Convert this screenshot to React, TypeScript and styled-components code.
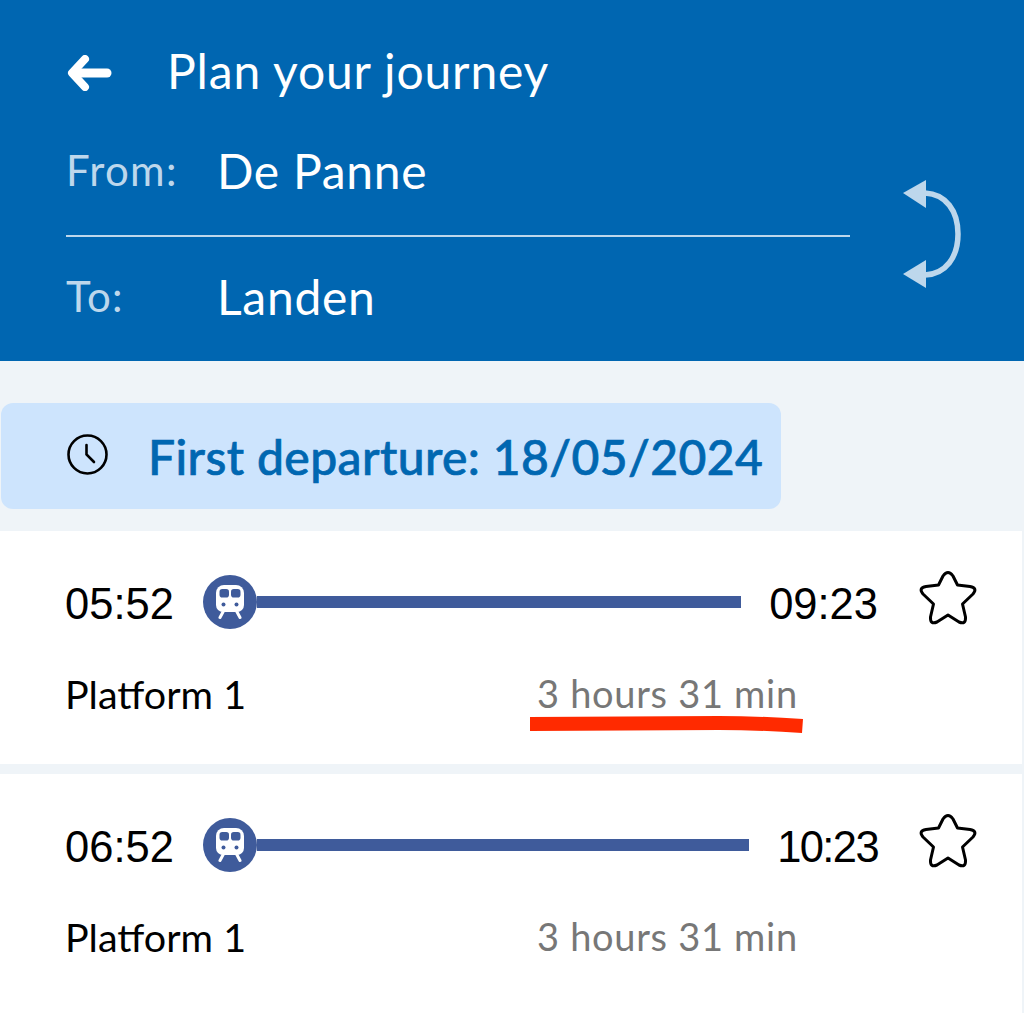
import React from 'react';
import styled, { createGlobalStyle } from 'styled-components';

const GlobalStyle = createGlobalStyle`
    html, body {
        margin: 0;
        padding: 0;
        background: #ffffff;
    }
    body {
        font-family: Lato, 'Open Sans', sans-serif;
    }
`;

const Page = styled.div`
    width: 1024px;
    height: 1013px;
    overflow: hidden;
    background: #eff4f8;
`;

const Header = styled.header`
    height: 361px;
    box-sizing: border-box;
    padding: 23px 0 0 66px;
    background: #0066b1;
    color: #ffffff;
`;

const TitleRow = styled.div`
    display: flex;
    align-items: center;
    gap: 55px;
    height: 100px;
`;

const Title = styled.h1`
    margin: -5px 0 0;
    font-size: 48px;
    font-weight: 400;
    letter-spacing: 0.85px;
`;

const Route = styled.div`
    display: flex;
    align-items: center;
`;

const Fields = styled.div`
    width: 784px;
`;

const Field = styled.div<{ $height: number; $divider?: boolean }>`
    display: flex;
    align-items: center;
    box-sizing: border-box;
    height: ${(p) => p.$height}px;
    padding-bottom: ${(p) => (p.$divider ? 18 : 0)}px;
    border-bottom: ${(p) => (p.$divider ? '2px solid #bdd7ec' : 'none')};
`;

const FieldLabel = styled.span`
    width: 152px;
    font-size: 42px;
    letter-spacing: 1.3px;
    color: #bdd7ec;
`;

const FieldValue = styled.span`
    margin-left: -1px;
    font-size: 48px;
    letter-spacing: 0.7px;
`;

const SwapButton = styled.div`
    margin: -10px 0 0 52px;
    line-height: 0;
`;

const Banner = styled.div`
    display: flex;
    align-items: center;
    gap: 40px;
    width: 780px;
    height: 106px;
    box-sizing: border-box;
    margin: 42px 0 22px 1px;
    padding-left: 66px;
    border-radius: 12px;
    background: #cde4fd;
`;

const BannerClock = styled.div`
    margin-top: -3px;
    line-height: 0;
`;

const BannerText = styled.span`
    font-size: 48px;
    font-weight: 500;
    letter-spacing: 0.4px;
    -webkit-text-stroke: 0.7px #0067b1;
    color: #0067b1;
`;

const Card = styled.section<{ $height: number; $pad: number }>`
    width: 1022px;
    height: ${(p) => p.$height}px;
    box-sizing: border-box;
    padding-top: ${(p) => p.$pad}px;
    margin-bottom: 10px;
    background: #ffffff;
`;

const TimeRow = styled.div`
    display: flex;
    align-items: center;
    height: 54px;
    padding: 0 44px 0 65px;
`;

const Time = styled.span<{ $spacing?: number }>`
    margin-top: 4px;
    font-family: 'Liberation Sans', Arial, sans-serif;
    font-size: 43.5px;
    letter-spacing: ${(p) => p.$spacing ?? 0}px;
    color: #000000;
`;

const Track = styled.div`
    flex: 1;
    display: flex;
    align-items: center;
    margin: 0 28px 0 29px;
`;

const TrainDot = styled.div`
    flex: none;
    width: 54px;
    height: 54px;
    display: flex;
    align-items: center;
    justify-content: center;
    border-radius: 50%;
    background: #3f5b9b;
`;

const TrackLine = styled.div`
    flex: 1;
    height: 12px;
    background: #3f5b9b;
`;

const Favourite = styled.div`
    flex: none;
    margin: -8px 0 0 40px;
    line-height: 0;
`;

const InfoRow = styled.div`
    display: flex;
    align-items: center;
    height: 50px;
    margin-top: 39px;
    padding-left: 65px;
`;

const Platform = styled.span`
    width: 472px;
    font-size: 39.5px;
    color: #000000;
`;

const Duration = styled.span`
    position: relative;
    font-size: 38px;
    letter-spacing: 0.7px;
    color: #777777;
`;

const Underline = styled.svg`
    position: absolute;
    left: -8px;
    top: 44px;
`;

const BackArrow = () => (
    <svg width="46" height="36" viewBox="0 0 46 36" fill="none" stroke="#ffffff" strokeLinecap="round" strokeLinejoin="round">
        <path d="M19 4 L6 18 L19 32" strokeWidth="8" />
        <path d="M9 18 H41" strokeWidth="9" />
    </svg>
);

const SwapIcon = () => (
    <svg width="60" height="110" viewBox="0 0 60 110" fill="#bdd7ec">
        <path d="M23 14 C44 15 56 32 56 55 C56 78 44 95 23 96" fill="none" stroke="#bdd7ec" strokeWidth="5.5" />
        <path d="M1 14 L24 1 V29 Z" />
        <path d="M1 95 L24 81 V109 Z" />
    </svg>
);

const ClockIcon = () => (
    <svg width="41" height="41" viewBox="0 0 41 41" fill="none" stroke="#000000" strokeWidth="2.6" strokeLinecap="round">
        <circle cx="20.5" cy="20.5" r="19" />
        <path d="M19.5 11 V20.5 L27 28" />
    </svg>
);

const TrainIcon = () => (
    <svg width="28" height="34" viewBox="0 0 28 34">
        <path fill="#ffffff" d="M8 0 H20 A8 8 0 0 1 28 8 V20 A7 7 0 0 1 21 27 H7 A7 7 0 0 1 0 20 V8 A8 8 0 0 1 8 0 Z" />
        <rect x="3.5" y="4" width="9.5" height="8.5" rx="2.8" fill="#3f5b9b" />
        <rect x="15" y="4" width="9.5" height="8.5" rx="2.8" fill="#3f5b9b" />
        <circle cx="7.5" cy="19.5" r="2" fill="#3f5b9b" />
        <circle cx="20.5" cy="19.5" r="2" fill="#3f5b9b" />
        <path d="M7.5 26 L4 32.5 M20.5 26 L24 32.5" stroke="#ffffff" strokeWidth="3" strokeLinecap="round" fill="none" />
    </svg>
);

const StarIcon = () => (
    <svg width="60" height="56" viewBox="0 0 60 56" fill="none" stroke="#000000" strokeWidth="3" strokeLinejoin="round">
        <path d="M25 6 Q30 -1 35 6 L39.5 15 L52 16.5 Q60 18 55 24 L44.5 34 L47.5 47 Q48 55 41 52 L30 45 L19 52 Q12 55 12.5 47 L15.5 34 L5 24 Q0 18 8 16.5 L20.5 15 Z" />
    </svg>
);

const journeys = [
    { from: '05:52', to: '09:23', toSpacing: 0, marked: true, height: 233, pad: 44 },
    { from: '06:52', to: '10:23', toSpacing: -1.6, marked: false, height: 239, pad: 44 },
];

export default function App() {
    return (
        <Page>
            <GlobalStyle />
            <Header>
                <TitleRow>
                    <BackArrow />
                    <Title>Plan your journey</Title>
                </TitleRow>
                <Route>
                    <Fields>
                        <Field $height={114} $divider>
                            <FieldLabel>From:</FieldLabel>
                            <FieldValue>De Panne</FieldValue>
                        </Field>
                        <Field $height={118}>
                            <FieldLabel>To:</FieldLabel>
                            <FieldValue>Landen</FieldValue>
                        </Field>
                    </Fields>
                    <SwapButton>
                        <SwapIcon />
                    </SwapButton>
                </Route>
            </Header>
            <Banner>
                <BannerClock>
                    <ClockIcon />
                </BannerClock>
                <BannerText>First departure: 18/05/2024</BannerText>
            </Banner>
            {journeys.map((j) => (
                <Card key={j.from} $height={j.height} $pad={j.pad}>
                    <TimeRow>
                        <Time>{j.from}</Time>
                        <Track>
                            <TrainDot>
                                <TrainIcon />
                            </TrainDot>
                            <TrackLine />
                        </Track>
                        <Time $spacing={j.toSpacing}>{j.to}</Time>
                        <Favourite>
                            <StarIcon />
                        </Favourite>
                    </TimeRow>
                    <InfoRow>
                        <Platform>Platform 1</Platform>
                        <Duration>
                            3 hours 31 min
                            {j.marked && (
                                <Underline width="276" height="22" viewBox="0 0 276 22">
                                    <path d="M1 3 L190 2 Q230 2 274 5 L273 19 Q230 16 190 16 L1 17 Z" fill="#ff2a00" />
                                </Underline>
                            )}
                        </Duration>
                    </InfoRow>
                </Card>
            ))}
        </Page>
    );
}
